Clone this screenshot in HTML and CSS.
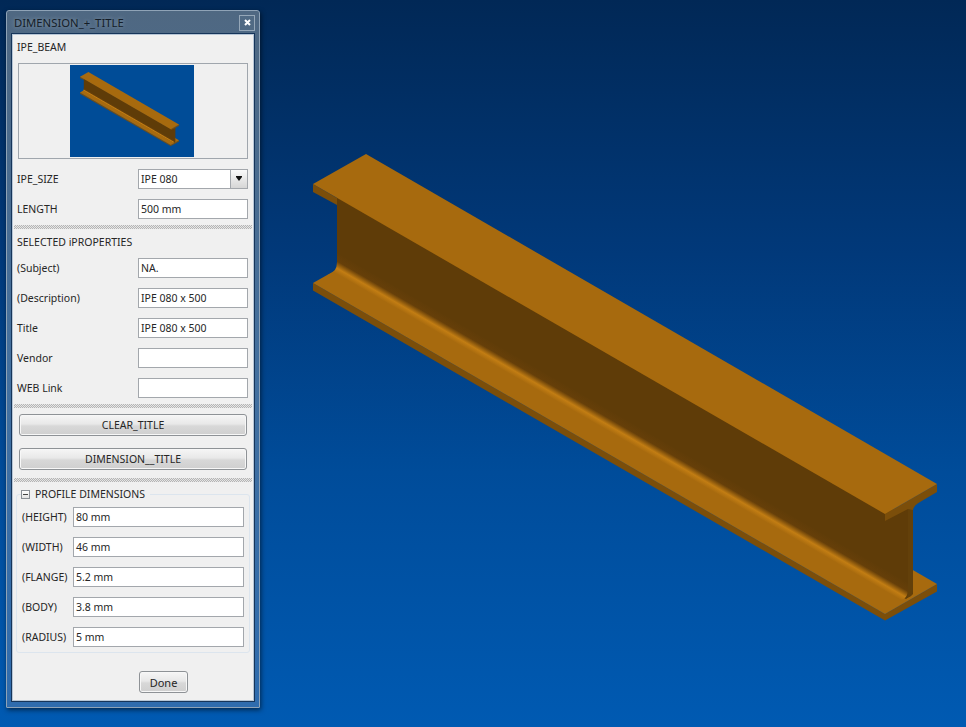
FILE: index.html
```html
<!DOCTYPE html>
<html lang="en">
<head>
<meta charset="utf-8">
<title>DIMENSION_+_TITLE</title>
<link rel="stylesheet" href="styles.css">
</head>
<body>
<svg class="scene" width="966" height="727" viewBox="0 0 966 727" aria-hidden="true">
  <defs>
    <linearGradient id="fillet" gradientUnits="userSpaceOnUse" x1="339" y1="253" x2="329.400" y2="269.600">
      <stop offset="0" stop-color="#5f3c08"/>
      <stop offset="0.42" stop-color="#663f09"/>
      <stop offset="0.74" stop-color="#c27d13"/>
      <stop offset="1" stop-color="#a76a0e"/>
    </linearGradient>
    <g id="beam">
      <path fill="#7b4e0a" d="M313 283 L885 614 L937 584 L937 591.500 L885 620.500 L313 290.500Z"/>
      <path fill="#a76a0e" d="M313 283 L366 253 L937 584 L885 614Z"/>
      <path fill="#5f3c08" d="M337 195 L885 511 L913 505 L913 594 L906 599 L337 268Z"/>
      <path fill="url(#fillet)" d="M337 253 L908 583 L908 590 Q908 598 901 600 L328 275 Q337 272 337 262Z"/>
      <path fill="#63400a" d="M908 509 L913 507 L913 593 Q912 597 906 598 Q908 596 908 590Z"/>
      <path fill="#7b4e0a" d="M313 184 L337 198 L337 205 L313 192Z"/>
      <path fill="#7b4e0a" d="M885 514 L937 484 L937 492 L920 502 Q914 505 913 510 L908 509 L885 521Z"/>
      <path fill="#a76a0e" d="M313 184 L366 154 L937 484 L885 514Z"/>
    </g>
  </defs>
  <use href="#beam"/>
</svg>

<section class="window">
  <header class="titlebar">
    <span class="title">DIMENSION_+_TITLE</span>
    <span class="close">
      <svg width="7" height="7" viewBox="0 0 7 7"><path d="M1 1 L6 6 M6 1 L1 6" stroke="#fff" stroke-width="2" fill="none"/></svg>
    </span>
  </header>
  <div class="client">
    <div class="caption">IPE_BEAM</div>
    <div class="preview">
      <div class="thumb">
        <svg class="thumb-beam" width="99" height="74" viewBox="313 154 624 466" aria-hidden="true"><use href="#beam"/></svg>
      </div>
    </div>
    <div class="rows rows-top">
      <div class="row">
        <label class="label">IPE_SIZE</label>
        <div class="field field-combo">
          <span class="value">IPE 080</span>
          <span class="combo-btn"><span class="arrow"></span></span>
        </div>
      </div>
      <div class="row">
        <label class="label">LENGTH</label>
        <div class="field"><span class="value">500 mm</span></div>
      </div>
    </div>
    <div class="sep sep-a"></div>
    <div class="caption caption-props">SELECTED iPROPERTIES</div>
    <div class="rows rows-props">
      <div class="row"><label class="label">(Subject)</label><div class="field"><span class="value">NA.</span></div></div>
      <div class="row"><label class="label">(Description)</label><div class="field"><span class="value">IPE 080 x 500</span></div></div>
      <div class="row"><label class="label">Title</label><div class="field"><span class="value">IPE 080 x 500</span></div></div>
      <div class="row"><label class="label">Vendor</label><div class="field"></div></div>
      <div class="row"><label class="label">WEB Link</label><div class="field"></div></div>
    </div>
    <div class="sep sep-b"></div>
    <div class="actions">
      <button class="btn btn-wide" type="button">CLEAR_TITLE</button>
      <button class="btn btn-wide" type="button">DIMENSION__TITLE</button>
    </div>
    <div class="sep sep-c"></div>
    <fieldset class="group">
      <legend class="legend"><span class="toggle"></span>PROFILE DIMENSIONS</legend>
      <div class="dim-row"><label class="label">(HEIGHT)</label><div class="field"><span class="value">80 mm</span></div></div>
      <div class="dim-row"><label class="label">(WIDTH)</label><div class="field"><span class="value">46 mm</span></div></div>
      <div class="dim-row"><label class="label">(FLANGE)</label><div class="field"><span class="value">5.2 mm</span></div></div>
      <div class="dim-row"><label class="label">(BODY)</label><div class="field"><span class="value">3.8 mm</span></div></div>
      <div class="dim-row"><label class="label">(RADIUS)</label><div class="field"><span class="value">5 mm</span></div></div>
    </fieldset>
    <div class="footer"><button class="btn btn-done" type="button">Done</button></div>
  </div>
</section>
</body>
</html>
```
FILE: styles.css
```css
* { box-sizing: border-box; }
html, body { margin: 0; padding: 0; }
body {
  width: 966px;
  height: 727px;
  overflow: hidden;
  position: relative;
  background: linear-gradient(180deg, #012856 0%, #01397a 35%, #004c9a 65%, #005ab2 100%);
  font-family: "Noto Sans", "Open Sans", sans-serif;
  font-size: 10.500px;
  color: #262626;
  padding: 10px 0 0 6px;
}
.scene { position: absolute; left: 0; top: 0; }

.window {
  position: relative;
  width: 254px;
  height: 698px;
  padding: 0 4px 5px 4px;
  border: 1px solid #8fa3b7;
  border-radius: 3px 3px 1px 1px;
  background: linear-gradient(180deg, #4f6882 0%, #44709e 50%, #2f6cae 100%);
  box-shadow: 1px 2px 5px rgba(0, 0, 0, 0.55);
  display: flex;
  flex-direction: column;
}
.titlebar {
  height: 22px;
  flex: none;
  display: flex;
  align-items: center;
  justify-content: space-between;
  margin: 0 -4px;
  padding: 0 4px 0 7px;
}
.title {
  font-size: 11.300px;
  color: #141d28;
  text-shadow: 0 0 4px rgba(165, 180, 195, 0.8);
}
.close {
  width: 16px;
  height: 16px;
  margin-top: 1px;
  border: 1px solid #95a7b8;
  background: #506a84;
  display: flex;
  align-items: center;
  justify-content: center;
}
.client {
  flex: 1;
  background: #f0f0f0;
  border: 1px solid #16355a;
  box-shadow: 0 0 0 1px #b7c6d6 inset;
  padding: 0 2px 0 2px;
  display: flex;
  flex-direction: column;
}
.caption { padding-left: 3px; line-height: 14px; }
.caption:first-child { margin-top: 6px; }
.preview {
  margin: 9px 4px 0 4px;
  height: 96px;
  border: 1px solid #a0a6ad;
  display: flex;
  justify-content: flex-start;
  align-items: center;
  padding-left: 51px;
  background: #f0f0f0;
}
.thumb {
  width: 124px;
  height: 92px;
  background: #004c97;
  padding: 7px 0 0 10px;
}
.thumb-beam { display: block; filter: blur(0.500px); }
.rows { display: flex; flex-direction: column; gap: 10px; padding: 0 4px 0 3px; }
.rows-top { margin-top: 10px; }
.rows-props { margin-top: 9px; }
.row { display: flex; align-items: center; justify-content: space-between; height: 20px; }
.label { line-height: 14px; white-space: nowrap; }
.field {
  width: 110px;
  height: 20px;
  background: #fff;
  border: 1px solid #a3a7ac;
  display: flex;
  align-items: center;
  position: relative;
  padding-left: 2px;
}
.value { line-height: 14px; white-space: nowrap; }
.field-combo { padding-right: 0; justify-content: space-between; }
.combo-btn {
  width: 17px;
  height: 18px;
  border-left: 1px solid #a3a7ac;
  background: linear-gradient(180deg, #fafafa, #d6d6d6);
  display: flex;
  align-items: center;
  justify-content: center;
}
.arrow {
  width: 0;
  height: 0;
  border-left: 3.500px solid transparent;
  border-right: 3.500px solid transparent;
  border-top: 4px solid #111;
  box-shadow: 0 -1px 0 #111;
}
.sep {
  height: 4px;
  flex: none;
  background-color: #e2e2e2;
  background-image: repeating-conic-gradient(#b4b4b4 0 25%, #e6e6e6 0 50%);
  background-size: 2px 2px;
}
.sep-a { margin-top: 6px; }
.sep-b { margin-top: 6px; }
.sep-c { margin-top: 8px; }
.caption-props { margin-top: 6px; }
.actions { display: flex; flex-direction: column; gap: 12px; padding: 6px 5px 0 5px; }
.btn {
  font: inherit;
  color: inherit;
  padding: 0;
  border: 1px solid #8e9296;
  border-radius: 3px;
  background: linear-gradient(180deg, #f6f6f6 0, #e8e8e8 45%, #d8d8d8 55%, #cfcfcf 100%);
  box-shadow: 0 0 0 1px #f7f7f7 inset;
}
.btn-wide { height: 22px; }
.group {
  margin: 5px 2px 0 2px;
  padding: 6px 5px 5px 5px;
  height: 166px;
  border: 1px solid #dce5ee;
  border-radius: 3px;
  display: flex;
  flex-direction: column;
  gap: 10px;
  min-width: 0;
}
.legend {
  padding: 0 5px 0 0;
  margin-left: -1px;
  display: flex;
  align-items: center;
  gap: 5px;
  line-height: 14px;
}
.toggle {
  width: 9px;
  height: 9px;
  border: 1px solid #8a8f95;
  background: linear-gradient(180deg, #fff, #e2e2e2);
  position: relative;
  display: block;
}
.toggle::after {
  content: "";
  position: absolute;
  left: 1px;
  right: 1px;
  top: 3px;
  height: 1px;
  background: #444;
}
.dim-row { display: flex; align-items: center; justify-content: space-between; height: 20px; }
.dim-row .field { width: 171px; }
.footer { display: flex; justify-content: flex-end; padding: 18px 64px 0 0; }
.btn-done { width: 49px; height: 22px; font-size: 11px; }
```
